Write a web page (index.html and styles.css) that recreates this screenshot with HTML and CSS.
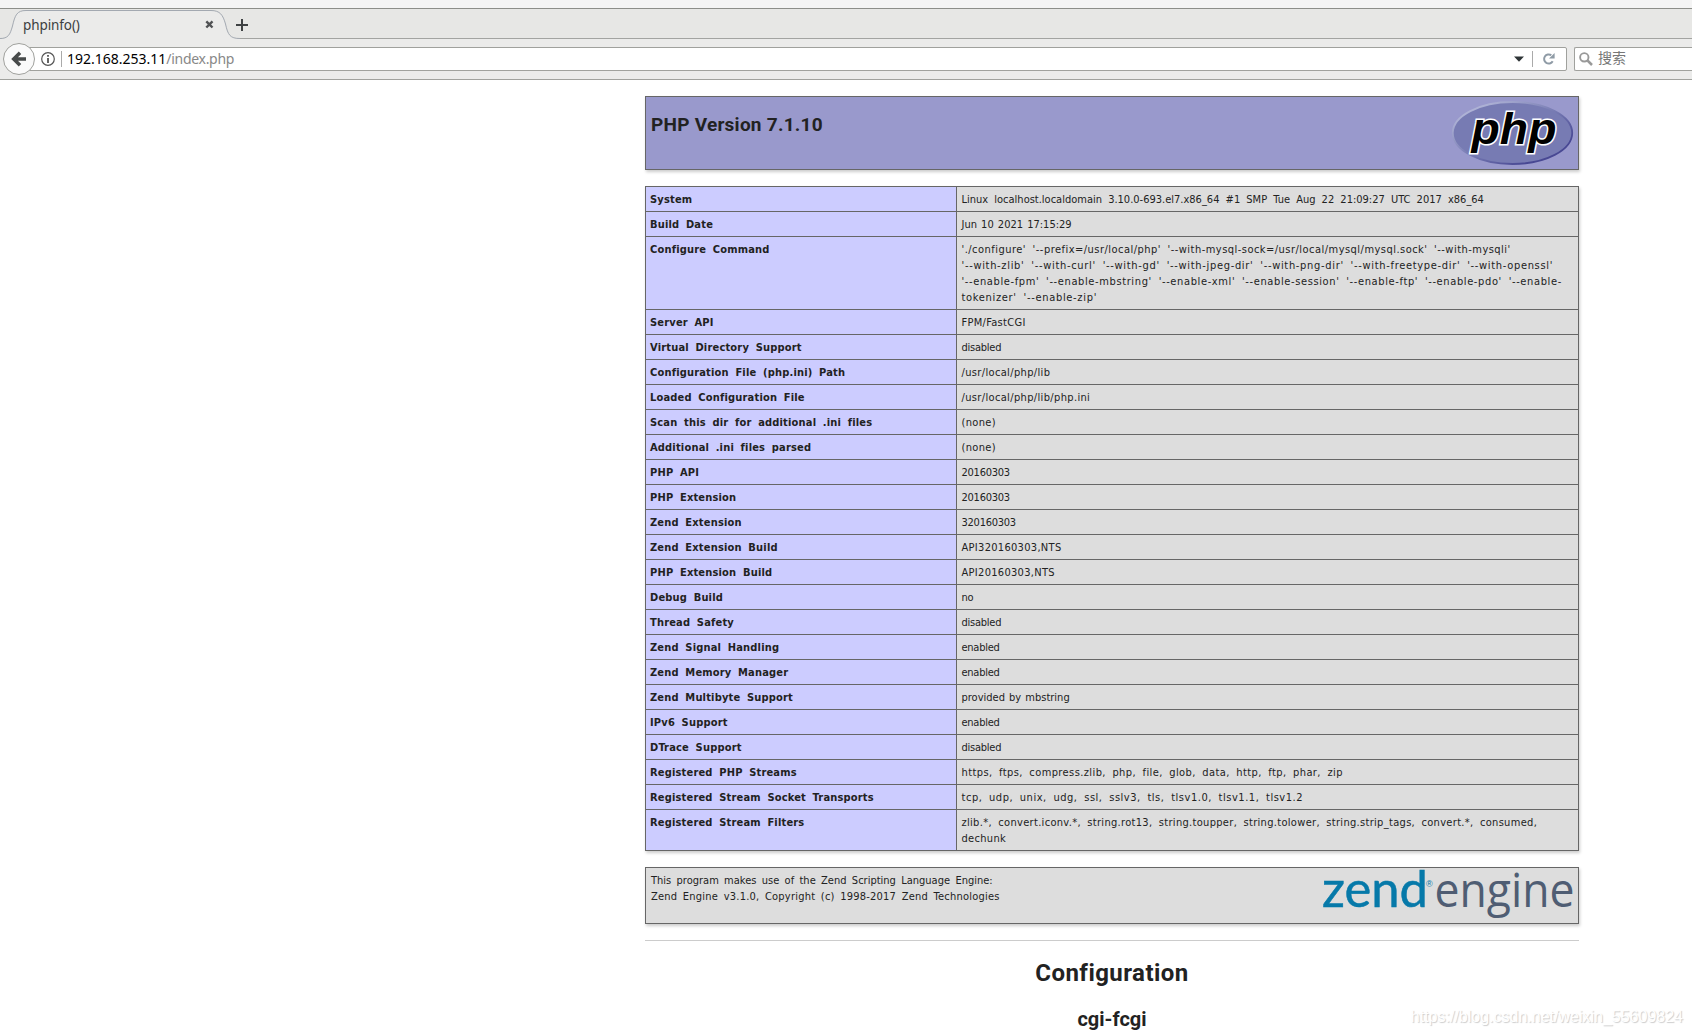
FILE: index.html
```html
<!DOCTYPE html>
<html lang="zh-CN">
<head>
    <meta charset="UTF-8">
    <title>phpinfo()</title>
    <link rel="stylesheet" href="styles.css">
</head>
<body>
    <div class="titlebar"></div>
    <div class="tabbar">
        <div class="tab">
            <svg class="tab-shape" width="240" height="30" viewBox="0 0 240 30">
                <path d="M0 29.5C8 29.5 10 26 12.5 17C15 6 17 1.5 26 1.5H211C220 1.5 223 6 225.5 15C228 26 230 29.5 240 29.5V30H0Z" fill="#ebebea"/>
                <path d="M0 29.5C8 29.5 10 26 12.5 17C15 6 17 1.5 26 1.5H211C220 1.5 223 6 225.5 15C228 26 230 29.5 240 29.5" fill="none" stroke="#a3a9b1"/>
            </svg>
            <span class="tab-title">phpinfo()</span>
            <svg width="9" height="9" viewBox="0 0 9 9"><path d="M1.3 1.3L7.5 7.5M7.5 1.3L1.3 7.5" stroke="#505254" stroke-width="2.4"/></svg>
        </div>
        <svg class="new-tab" width="12" height="12" viewBox="0 0 12 12"><path d="M6 0V12M0 6H12" stroke="#3f4243" stroke-width="2"/></svg>
    </div>
    <div class="toolbar">
        <div class="back">
            <svg width="16" height="16" viewBox="0 0 16 16"><path d="M15 8H3.5M9 1.7L2.7 8L9 14.3" fill="none" stroke="#474a4a" stroke-width="3.5"/></svg>
        </div>
        <div class="urlbar">
            <svg width="14" height="14" viewBox="0 0 14 14"><circle cx="7" cy="7" r="6.3" fill="none" stroke="#555" stroke-width="1.2"/><path d="M7 3V4.800M7 6V11" stroke="#555" stroke-width="1.8"/></svg>
            <i class="sep"></i>
            <span class="url"><b>192.168.253.11</b><span>/index.php</span></span>
            <svg class="arrow" width="10" height="6" viewBox="0 0 10 6"><path d="M0 .5H10L5 5.8Z" fill="#2e3436"/></svg>
            <i class="sep"></i>
            <svg class="reload" width="12" height="12" viewBox="0 0 12 12"><path d="M9.7 8.3A4.6 4.6 0 1 1 8.3 2.2" fill="none" stroke="#8f9ba6" stroke-width="2"/><path d="M11.6 0V5.6H6Z" fill="#8f9ba6"/></svg>
        </div>
        <div class="search">
            <svg width="14" height="14" viewBox="0 0 14 14"><circle cx="5.3" cy="5.3" r="4.2" fill="none" stroke="#999" stroke-width="1.9"/><path d="M8.5 8.5L13 13" stroke="#999" stroke-width="2.5"/></svg>
            <span>搜索</span>
        </div>
    </div>

    <div class="center">
        <div class="box header">
            <h1 class="p">PHP Version 7.1.10</h1>
            <svg width="121" height="64" viewBox="0 0 121 64">
                <defs>
                    <linearGradient id="rim" x1="0" y1="0" x2="1" y2="1">
                        <stop offset=".15" stop-color="#aeb2d5"/>
                        <stop offset=".5" stop-color="#777bb3"/>
                        <stop offset=".8" stop-color="#484893"/>
                    </linearGradient>
                </defs>
                <ellipse cx="60.5" cy="32" rx="59.7" ry="31" fill="#777bb3" stroke="url(#rim)" stroke-width="1.8"/>
                <text class="php" x="19.5" y="43" textLength="85" lengthAdjust="spacingAndGlyphs">php</text>
            </svg>
        </div>

        <table>
            <tr><td class="e">System</td><td class="v">Linux localhost.localdomain 3.10.0-693.el7.x86_64 #1 SMP Tue Aug 22 21:09:27 UTC 2017 x86_64</td></tr>
            <tr><td class="e">Build Date</td><td class="v date">Jun 10 2021 17:15:29</td></tr>
            <tr><td class="e">Configure Command</td><td class="v command"><span class="first">'./configure' '--prefix=/usr/local/php' '--with-mysql-sock=/usr/local/mysql/mysql.sock' '--with-mysqli'</span><br>'--with-zlib' '--with-curl' '--with-gd' '--with-jpeg-dir' '--with-png-dir' '--with-freetype-dir' '--with-openssl'<br><span class="third">'--enable-fpm' '--enable-mbstring' '--enable-xml' '--enable-session' '--enable-ftp' '--enable-pdo' '--enable-</span><br>tokenizer' '--enable-zip'</td></tr>
            <tr><td class="e">Server API</td><td class="v api">FPM/FastCGI</td></tr>
            <tr><td class="e">Virtual Directory Support</td><td class="v word">disabled</td></tr>
            <tr><td class="e">Configuration File (php.ini) Path</td><td class="v path">/usr/local/php/lib</td></tr>
            <tr><td class="e">Loaded Configuration File</td><td class="v path">/usr/local/php/lib/php.ini</td></tr>
            <tr><td class="e">Scan this dir for additional .ini files</td><td class="v path">(none)</td></tr>
            <tr><td class="e">Additional .ini files parsed</td><td class="v path">(none)</td></tr>
            <tr><td class="e">PHP API</td><td class="v word">20160303</td></tr>
            <tr><td class="e">PHP Extension</td><td class="v word">20160303</td></tr>
            <tr><td class="e">Zend Extension</td><td class="v word">320160303</td></tr>
            <tr><td class="e">Zend Extension Build</td><td class="v api">API320160303,NTS</td></tr>
            <tr><td class="e">PHP Extension Build</td><td class="v api">API20160303,NTS</td></tr>
            <tr><td class="e">Debug Build</td><td class="v word">no</td></tr>
            <tr><td class="e">Thread Safety</td><td class="v word">disabled</td></tr>
            <tr><td class="e">Zend Signal Handling</td><td class="v word">enabled</td></tr>
            <tr><td class="e">Zend Memory Manager</td><td class="v word">enabled</td></tr>
            <tr><td class="e">Zend Multibyte Support</td><td class="v date">provided by mbstring</td></tr>
            <tr><td class="e">IPv6 Support</td><td class="v word">enabled</td></tr>
            <tr><td class="e">DTrace Support</td><td class="v word">disabled</td></tr>
            <tr><td class="e">Registered PHP Streams</td><td class="v list">https, ftps, compress.zlib, php, file, glob, data, http, ftp, phar, zip</td></tr>
            <tr><td class="e">Registered Stream Socket Transports</td><td class="v list transports">tcp, udp, unix, udg, ssl, sslv3, tls, tlsv1.0, tlsv1.1, tlsv1.2</td></tr>
            <tr><td class="e">Registered Stream Filters</td><td class="v filters">zlib.*, convert.iconv.*, string.rot13, string.toupper, string.tolower, string.strip_tags, convert.*, consumed,<br>dechunk</td></tr>
        </table>

        <div class="box zend">
            <p>This program makes use of the Zend Scripting Language Engine:<br><span class="copyright">Zend Engine v3.1.0, Copyright (c) 1998-2017 Zend Technologies</span></p>
            <svg width="252" height="48" viewBox="0 0 252 48">
                <text class="logo-zend" x="1" y="35" textLength="106" lengthAdjust="spacingAndGlyphs">zend</text>
                <text class="logo-reg" x="105" y="14.5">®</text>
                <text class="logo-engine" x="113.5" y="35" textLength="140" lengthAdjust="spacingAndGlyphs">engine</text>
            </svg>
        </div>
        <hr>
        <h1>Configuration</h1>
        <h2>cgi-fcgi</h2>
    </div>
    <div class="watermark">https://blog.csdn.net/weixin_55609824</div>
</body>
</html>
```
FILE: styles.css
```css
* {
    box-sizing: border-box;
}
body {
    margin: 0;
    height: 1036px;
    overflow: hidden;
    background: #fff;
    color: #222;
    font-family: "DejaVu Sans Condensed", "DejaVu Sans", sans-serif;
    font-size: 11px;
}
svg {
    display: block;
    flex: none;
    overflow: visible;
}
.titlebar {
    height: 9px;
    background: #f4f4f4;
    border-bottom: 1px solid #8c8e89;
}
.tabbar {
    display: flex;
    height: 30px;
    background: #e7e7e5;
    box-shadow: inset 0 -1px #a3a4a1;
}
.tab {
    position: relative;
    display: flex;
    align-items: center;
    width: 236px;
    height: 30px;
    padding: 2px 22px 0 23px;
    font: 13.5px "Noto Sans", sans-serif;
    color: #3b3e40;
}
.tab-shape {
    position: absolute;
    left: 0;
    top: 0;
}
.tab-title {
    position: relative;
    flex: 1;
    letter-spacing: -0.1px;
    margin-top: -1px;
}
.tab svg:last-child {
    position: relative;
    margin: -1px 0 0 0;
}
.new-tab {
    margin-top: 10px;
}
.toolbar {
    display: flex;
    align-items: center;
    height: 41px;
    padding-left: 3px;
    background: #ebebea;
    border-bottom: 1px solid #a0a19d;
    font: 14px "Noto Sans", "Noto Sans CJK SC", sans-serif;
}
.back {
    display: flex;
    align-items: center;
    justify-content: center;
    width: 32px;
    height: 32px;
    border: 1px solid #a0a19d;
    border-radius: 50%;
    background: #fafafa;
    z-index: 1;
}
.urlbar, .search {
    display: flex;
    align-items: center;
    height: 24px;
    border: 1px solid #a0a19d;
    background: #fff;
}
.urlbar {
    width: 1538px;
    margin-left: -6px;
    padding: 0 11px;
    border-radius: 0 2px 2px 0;
}
.sep {
    width: 1px;
    height: 16px;
    margin-left: 6px;
    background: #aaa;
}
.url {
    flex: 1;
    margin-left: 5px;
    color: #888;
    line-height: 22px;
}
.url b {
    font-weight: normal;
    color: #000;
}
.url span {
    letter-spacing: -0.3px;
}
.arrow {
    margin-right: 2px;
}
.reload {
    margin-left: 10px;
}
.search {
    flex: 1;
    margin-left: 7px;
    padding-left: 4px;
    border-right: 0;
    border-radius: 2px 0 0 2px;
    color: #777;
}
.search span {
    margin-left: 5px;
    line-height: 20px;
    padding-bottom: 2px;
}
.center {
    width: 934px;
    margin: 16px 0 0 645px;
}
.box, table {
    margin-bottom: 16px;
    box-shadow: 1px 2px 3px #ccc;
}
.box {
    display: flex;
    justify-content: space-between;
    border: 1px solid #666;
    padding: 4px 5px;
}
.header {
    height: 74px;
    background: #9999cc;
}
h1, h2 {
    margin: 0;
    font-family: Roboto, sans-serif;
    text-align: center;
}
h1 {
    font-size: 24px;
    line-height: 30px;
    letter-spacing: 0.45px;
}
h1.p {
    margin-top: 11px;
    font-size: 19px;
    line-height: 25px;
    letter-spacing: 0.25px;
}
h2 {
    margin-top: 19px;
    font-size: 20px;
    line-height: 24px;
}
.php {
    font: italic bold 45px "Liberation Sans", sans-serif;
    fill: #000;
    stroke: #fff;
    stroke-width: 3px;
    paint-order: stroke;
}
table {
    width: 934px;
    border-collapse: collapse;
    table-layout: fixed;
}
td {
    height: 25px;
    padding: 5px 4px 3px;
    border: 1px solid #666;
    line-height: 16px;
    vertical-align: top;
    white-space: nowrap;
}
.e {
    width: 311px;
    background: #ccccff;
    font-weight: bold;
    letter-spacing: 0.18px;
    word-spacing: 3px;
}
.v {
    background: #ddd;
    padding-left: 4.5px;
    word-spacing: 3px;
}
.date {
    word-spacing: 1px;
}
.command {
    letter-spacing: 0.68px;
}
.first {
    letter-spacing: 0.47px;
}
.third {
    letter-spacing: 0.62px;
}
.api {
    letter-spacing: 0.3px;
}
.word {
    letter-spacing: -0.25px;
}
.path {
    letter-spacing: 0.35px;
}
.list {
    letter-spacing: 0.4px;
}
.transports {
    letter-spacing: 0.53px;
}
.filters {
    letter-spacing: 0.31px;
}
.zend {
    height: 57px;
    background: #ddd;
    line-height: 16px;
    word-spacing: 2.2px;
}
.zend p {
    margin: 1px 0 0;
}
.copyright {
    letter-spacing: 0.22px;
}
.logo-zend {
    font: 50px Lato, sans-serif;
    fill: #0679a9;
    stroke: #0679a9;
    stroke-width: 0.5px;
}
.logo-reg {
    font: 9px "Liberation Sans", sans-serif;
    fill: #0679a9;
}
.logo-engine {
    font: 47px "Open Sans", sans-serif;
    fill: #4f5d73;
}
hr {
    height: 1px;
    margin: 0 0 17px;
    border: 0;
    background: #ccc;
}
.watermark {
    position: absolute;
    right: 9px;
    bottom: 10px;
    font: 16px/18px "Liberation Sans", sans-serif;
    color: #fff;
    text-shadow: 1px 1px 1px #ccc;
}
```
